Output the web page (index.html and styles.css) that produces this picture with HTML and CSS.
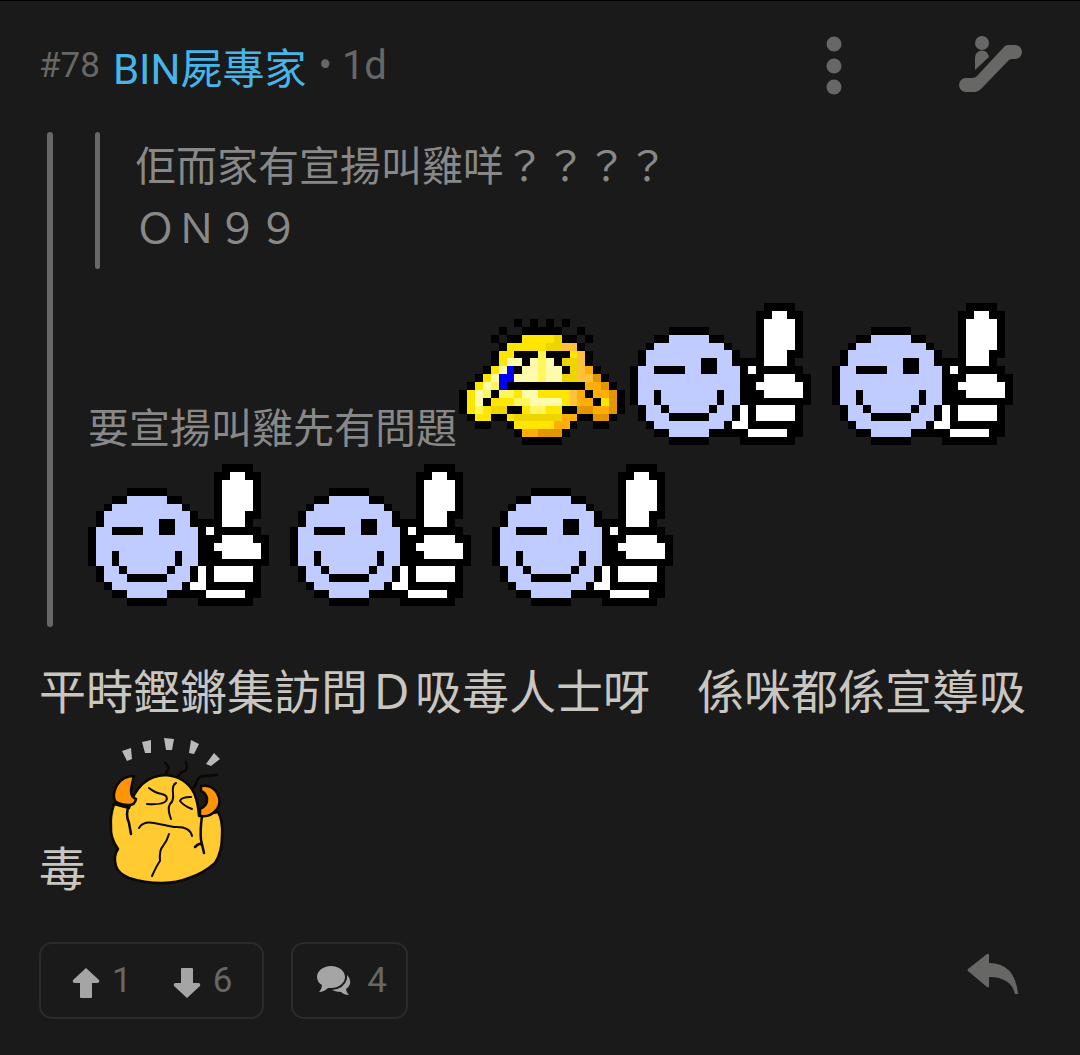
FILE: index.html
```
<!DOCTYPE html>
<html lang="zh-HK">
<head>
  <meta charset="utf-8">
  <meta name="viewport" content="width=device-width, initial-scale=1">
  <title>#78 BIN屍專家</title>
  <link rel="stylesheet" href="styles.css">
</head>
<body>
<!-- emoji sprites, one unit = one pixel -->
<svg class="sprites" aria-hidden="true">
  <symbol id="emo-good" viewBox="0 0 23 18" shape-rendering="crispEdges">
    <path fill="#000" d="M5 3h5v1h2v1h1v1h1v1h2V1h1V0h4v1h1v6h-1v1h1v1h1v4h-1v4h-1v1h-7v-1h-4v1H5v-1H3v-1H2v-1H1v-2H0V8h1V6h1V5h1V4h2z"/>
    <path fill="#c0cbff" d="M5 4h5v1h2v1h1v2h1v5h-1v2h-1v1h-2v1H5v-1H3v-1H2v-2H1V8h1V6h1V5h2z"/>
    <path fill="#000" d="M3 8h4v1H3zM9 7h2v2H9zM3 11h1v2h1v1h5v-1h1v-2h1v2h-1v1h-1v1H5v-1H4v-1H3z"/>
    <path fill="#fff" d="M18 1h2v1h1v4h-1v2h-3V2h1zM15 8h1v1h-1zM17 9h4v1h1v2h-5v-1h-1v-1h1zM16 13h5v2h-5zM14 13h1v3h-2v-1h1zM15 16h5v1h-5z"/>
  </symbol>
  <symbol id="emo-cry" viewBox="0 0 21 16" shape-rendering="crispEdges">
    <path fill="#000" d="M7 0h1v1H7zM9 0h1v1H9zM11 0h1v1h-1zM13 0h1v1h-1zM5 1h1v1H5zM15 1h1v1h-1zM4 2h1v1H4zM16 2h1v1h-1z"/>
    <path fill="#000" d="M8 1h5v1h2v1h1v1h1v2h1v1h1v1h1v1h1v3h-1v1h-1v1h-2v-1h-2v1h-1v1h-1v1H8v-1H7v-1H6v-1H4v1H2v-1H1v-1H0V9h1V8h1V7h1V6h1V4h1V3h1V2h2z"/>
    <path fill="#ffe600" d="M8 2h5v1h2v1h1v2h1v1h1v1h1v1h1v3h-1v1h-2v-1h-2v1h-1v1h-1v1H8v-1H7v-1H6v-1H4v1H2v-1H1V9h1V8h1V7h1V6h1V4h1V3h2z"/>
    <path fill="#eed500" d="M12 2h1v1h1v2h1v4h-2V6h-1V4h-1V3h1zM4 11h2v1H4zM7 12h6v1H7z"/>
    <path fill="#ffc13b" d="M13 3h2v1h1v2h1v1h1v1h-1v1h-3V8h1V4h-2zM14 9h2v2h-2z"/>
    <path fill="#ffad08" d="M16 6h1v1h1v1h1v2h-1v1h1v1h-3v-1h-1V9h1V8h1V7h-1zM13 12h2v1h-1v1h-1v1H8v-1h4v-1h1z"/>
    <path fill="#e39500" d="M18 7v1h1v1h1v3h-1v1h-2v-1h2V9h-1V8h-1V7zM15 11h2v1h-2zM10 14h3v1h-3z"/>
    <path fill="#fffbad" d="M6 5h2v1H6zM8 6h1V5h1v1h1V5h1v1h1v2H7V7h1zM5 6h1v1H5zM4 7h1v1H4zM3 8h1v1H3zM2 9h1v2H2zM9 10h4v1H9zM8 9h2v1H8z"/>
    <path fill="#fff65e" d="M10 4h1v4h-1zM4 8h1v1H4zM3 9h1v1H3zM2 11h1v1H2zM5 9h2v1H5zM7 10h2v1H7zM9 11h2v1H9z"/>
    <path fill="#000" d="M7 4h3v1H9v1H8V5H7zM11 4h3v1h-1v1h-1V5h-1zM7 6h1v1H7zM13 6h1v1h-1zM6 8h10v1h1v1h1v1h-1v-1h-1V9H6zM4 9h1v1H4zM3 10h1v1H3zM6 11h2v1H6zM13 11h2v1h-2z"/>
    <path fill="#0000f5" d="M6 6h1v2H6v1H5V7h1z"/>
  </symbol>
</svg>

<article class="post">
  <header class="post-head">
    <span class="floor">#78</span>
    <a class="author" href="#">BIN屍專家</a>
    <span class="time">• 1d</span>
    <button class="icon-btn more" type="button" aria-label="更多">
      <svg width="16" height="60" viewBox="0 0 16 60"><circle cx="8" cy="9" r="7.5"/><circle cx="8" cy="31" r="7.5"/><circle cx="8" cy="52" r="7.5"/></svg>
    </button>
    <button class="icon-btn" type="button" aria-label="扶手電梯">
      <svg width="66" height="60" viewBox="0 0 66 60">
        <circle cx="24" cy="8" r="7"/>
        <path d="M17 35V23a7 7 0 0 1 14-1z"/>
        <path d="M8 43h6q3 0 5-2l26-28q2-3 5-3h7a7 7 0 0 1 0 14h-3q-3 0-5 3L23 54q-3 3-6 3H8a7 7 0 0 1 0-14z"/>
      </svg>
    </button>
  </header>

  <blockquote class="quote">
    <blockquote class="quote quote-inner">佢而家有宣揚叫雞咩？？？？<br>ＯＮ９９</blockquote>
    <p class="quote-text">要宣揚叫雞先有問題<svg class="emo emo-cry" role="img" aria-label="cry"><use href="#emo-cry"/></svg><svg class="emo emo-good" role="img" aria-label="good"><use href="#emo-good"/></svg><svg class="emo emo-good" role="img" aria-label="good"><use href="#emo-good"/></svg><svg class="emo emo-good" role="img" aria-label="good"><use href="#emo-good"/></svg><svg class="emo emo-good" role="img" aria-label="good"><use href="#emo-good"/></svg><svg class="emo emo-good" role="img" aria-label="good"><use href="#emo-good"/></svg></p>
  </blockquote>

  <p class="post-text">平時鏗鏘集訪問Ｄ吸毒人士呀　係咪都係宣導吸毒<svg class="emo emo-mad" viewBox="0 0 120 152" role="img" aria-label="mad">
      <g fill="#b9b9b9"><path d="M16 15l9-3 1 11-5 2zM36 6l9-2v13h-6zM58 2l10 1-2 11h-6zM85 4l8 4-5 10-5-1zM108 17l6 6-9 7-5-2z"/></g>
      <g fill="none" stroke="#0c0800" stroke-width="2.5" stroke-linecap="round" stroke-linejoin="round">
        <path d="M59 27q6 4 2 8l-2 5M80 26q2 7-1 9-6 1-7 7M86 54q3-3 5-9 2-5 7-5l13-1"/>
        <path fill="#ffcb30" d="M23 72Q32 40 60 39Q80 41 88 57Q92 66 93 80L112 76Q117 84 116 100Q116 116 109 127Q98 137 83 142Q71 147 56 147Q38 147 23 142Q12 137 10 130Q7 120 12 113Q4 102 5 90Q4 80 8 68z"/>
        <path fill="#ff9408" d="M28 40Q17 40 11 49Q6 59 9 65Q14 69 23 69Q29 69 30 63Q25 61 25 55Q25 51 28 40zM95 50Q106 48 111 57Q116 66 111 73Q104 82 94 80V73Q102 70 101 62Q99 56 95 55z"/>
        <path d="M23 70q-4 8 0 17l2 11M96 80q-2 14-1 24l3 13M96 109q-2-3-7 2"/>
        <path stroke-width="2" d="M43 52q6 5 13 6 7 2 4 7-3 4-19 3M85 61q-10 0-11 4 4 5 12 8M70 47q-4 2-3 10 1 8-3 11-3 5 1 15M33 92q4-7 15-5l20 4q16-1 18 9M63 98q-2 7-6 12-4 4-3 15-3 4-8 15"/>
      </g>
    </svg></p>

  <footer class="post-foot">
    <div class="pill votes">
      <button class="count-btn" type="button" aria-label="正評 1">
        <svg width="28" height="30" viewBox="0 0 28 30"><path d="M14 0L27 12q1 3-2 3h-5v14q0 1-1 1H9q-1 0-1-1V15H3q-3 0-2-3z"/></svg>
        <span>1</span>
      </button>
      <button class="count-btn" type="button" aria-label="負評 6">
        <svg width="28" height="30" viewBox="0 0 28 30"><path d="M14 30L1 18q-1-3 2-3h5V1q0-1 1-1h10q1 0 1 1v14h5q3 0 2 3z"/></svg>
        <span>6</span>
      </button>
    </div>
    <button class="pill count-btn replies" type="button" aria-label="回覆 4">
      <svg width="34" height="30" viewBox="0 0 34 30">
        <path d="M14 0c8 0 14 5 14 11s-6 11-14 11l-3 0q-4 4-9 4 3-3 3-7-5-3-5-8C0 5 6 0 14 0z"/>
        <path d="M30 9q4 4 3 9-1 3-4 5 0 3 3 6-5 0-8-3-5 0-9-2Q27 23 30 13z"/>
      </svg>
      <span>4</span>
    </button>
    <button class="icon-btn reply" type="button" aria-label="引用">
      <svg width="52" height="42" viewBox="0 0 52 42"><path d="M1 16L20 1q2-1 2 1v8q26 0 29 31h-3Q44 24 22 24v9q0 2-2 1L1 18q-1-1 0-2z"/></svg>
    </button>
  </footer>
</article>
</body>
</html>
```
FILE: styles.css
```
* {
    box-sizing: border-box;
}
body {
    margin: 0;
    background: #1a1a1a;
    color: #c9c6c1;
    font-family: Roboto, "Noto Sans CJK TC", sans-serif;
}
button {
    padding: 0;
    border: 0;
    background: none;
    font: inherit;
    cursor: pointer;
}
svg {
    display: block;
    flex: none;
}
.sprites {
    position: absolute;
    width: 0;
    height: 0;
}

.post {
    padding: 31px 40px 36px 39px;
    border-top: 1px solid #000;
}

/* header */
.post-head {
    display: flex;
    align-items: center;
    height: 66px;
    color: #676765;
}
.floor {
    font-size: 35px;
}
.author {
    margin: 0 12px 0 13px;
    font-size: 42px;
    color: #47b5e9;
    text-decoration: none;
}
.time {
    font-size: 40px;
}
.icon-btn {
    color: #676765;
}
.icon-btn svg,
.count-btn svg {
    fill: currentColor;
}
.more {
    margin-left: auto;
    margin-right: 116px;
}
.post-head .icon-btn:last-child {
    margin-right: 16px;
}

/* quotes */
.quote {
    position: relative;
    margin: 34px 0 0 8px;
    padding-left: 41px;
    color: #888;
    font-size: 41px;
    line-height: 62px;
}
.quote::before {
    content: "";
    position: absolute;
    top: 0;
    bottom: 0;
    left: 0;
    width: 6px;
    border-radius: 3px;
    background: #676765;
}
.quote-inner {
    margin: 0 0 30px 7px;
    padding: 4px 0 9px 40px;
}
.quote-inner::before {
    width: 5px;
}
.quote-text,
.post-text {
    margin: 0;
}
.quote-text {
    padding-bottom: 6px;
}

/* emoji */
.emo {
    display: inline-block;
    vertical-align: -2px;
}
.emo-cry {
    width: 166px;
    height: 126px;
    margin: 0 5px 0 2px;
}
.emo-good {
    width: 181px;
    height: 142px;
    margin: 4px 21px 0 0;
}
.emo-mad {
    width: 120px;
    height: 152px;
    margin: 9px 0 0 20px;
}

.post-text {
    margin-top: 32px;
    font-size: 47px;
    line-height: 68px;
}

/* footer */
.post-foot {
    display: flex;
    align-items: center;
    margin-top: 38px;
}
.pill {
    display: flex;
    align-items: center;
    height: 77px;
    border: 2px solid #2b2b2b;
    border-radius: 13px;
}
.votes {
    gap: 41px;
    padding: 0 30px 0 31px;
}
.count-btn {
    display: flex;
    align-items: center;
    gap: 12px;
    color: #a5a5a5;
    font-size: 35px;
}
.votes svg {
    margin-top: 4px;
}
.count-btn span {
    color: #676765;
}
.replies {
    gap: 16px;
    margin-left: 27px;
    padding: 0 19px 0 24px;
}
.reply {
    margin: 0 21px 14px auto;
}
```
